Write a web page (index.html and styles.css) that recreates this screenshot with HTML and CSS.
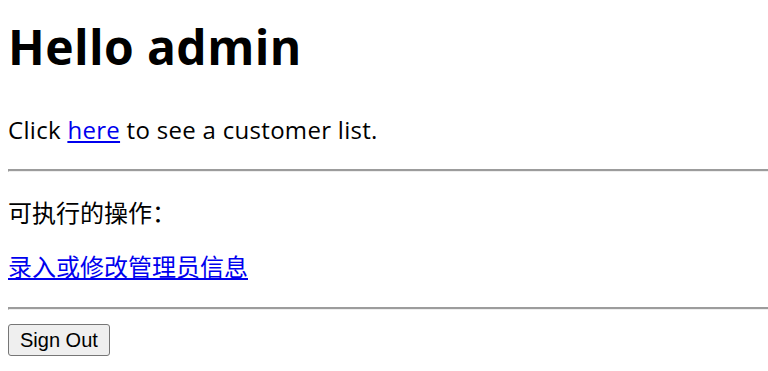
FILE: index.html
```html
<!DOCTYPE html>
<html lang="zh-CN">
<head>
<meta charset="utf-8">
<title>Hello admin</title>
<link rel="stylesheet" href="styles.css">
</head>
<body class="page">
  <h1 class="title">Hello admin</h1>
  <p class="intro">Click <a class="link" href="#">here</a> to see a customer list.</p>
  <hr class="rule rule-first">
  <p class="actions-label">可执行的操作：</p>
  <p class="action"><a class="link" href="#">录入或修改管理员信息</a></p>
  <hr class="rule rule-second">
  <form class="signout">
    <button class="signout-btn" type="button">Sign Out</button>
  </form>
</body>
</html>
```

FILE: styles.css
```css
html, body {
  background: #ffffff;
}

.page {
  margin: 0;
  padding: 0 0 0 8px;
  font-family: "Open Sans", "Noto Sans CJK SC", sans-serif;
  font-size: 24px;
  line-height: 32px;
  color: #000000;
}

.title {
  margin: 15px 0 0;
  font-size: 48px;
  line-height: 64px;
  font-weight: 700;
  letter-spacing: 0.4px;
}

.intro {
  margin: 35px 0 0;
  letter-spacing: 0.3px;
}

.link {
  color: #0000ee;
  text-decoration: underline;
}

.rule {
  height: 0;
  margin: 0;
  border-style: solid;
  border-color: #9c9c9c #eeeeee #eeeeee #9c9c9c;
  border-width: 2px 0 1px 1px;
}

.rule-first {
  margin-top: 23px;
}

.actions-label {
  margin: 25px 0 0;
}

.action {
  margin: 22px 0 0;
}

.rule-second {
  margin-top: 24px;
}

.signout {
  display: flex;
  margin: 14px 0 0;
}

.signout-btn {
  box-sizing: border-box;
  height: 32px;
  padding: 0 11px;
  font-family: "Liberation Sans", Arial, sans-serif;
  font-size: 20px;
  line-height: 23px;
  color: #000000;
  background: #efefef;
  border: 1px solid #767676;
  border-radius: 3px;
}
```
